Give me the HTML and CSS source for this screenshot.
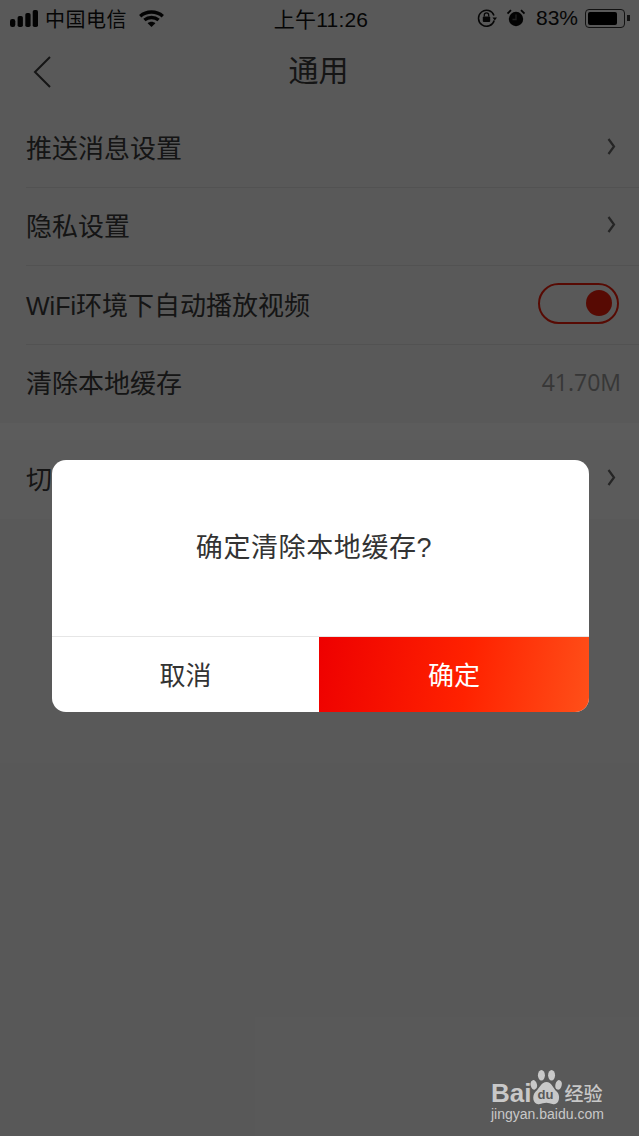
FILE: index.html
```html
<!DOCTYPE html>
<html lang="zh-CN">
<head>
  <meta charset="UTF-8">
  <meta name="viewport" content="width=device-width, initial-scale=1.0">
  <title>通用</title>
  <link rel="stylesheet" href="styles.css">
</head>
<body>
  <div id="page">
    <!-- Status bar -->
    <div class="status-bar">
      <div class="status-left">
        <svg class="signal" width="28" height="17" viewBox="0 0 28 17">
          <rect x="0" y="9" width="5.300" height="8" rx="2.200"/>
          <rect x="7.600" y="6" width="5.300" height="11" rx="1.800"/>
          <rect x="15.300" y="3" width="5.300" height="14" rx="1.800"/>
          <rect x="22.700" y="0" width="5.300" height="17" rx="1.800"/>
        </svg>
        <span class="carrier">中国电信</span>
        <svg class="wifi" width="25" height="17" viewBox="0 0 25 17">
          <path d="M1.200 6.200C7.500 .6 17.500 .6 23.800 6.200" fill="none" stroke="#0b0b0b" stroke-width="3.400"/>
          <path d="M5.400 10C9.500 6.600 15.500 6.600 19.600 10" fill="none" stroke="#0b0b0b" stroke-width="3.400"/>
          <path d="M8.600 13.300C10.800 11.300 14.200 11.300 16.400 13.300L12.500 17Z" fill="#0b0b0b"/>
        </svg>
      </div>
      <div class="status-time">上午11:26</div>
      <div class="status-right">
        <svg class="rotate-lock" width="20" height="20" viewBox="0 0 20 20">
          <path d="M17 7.500A8 8 0 1 0 17.200 12.500" fill="none" stroke="#111" stroke-width="1.500"/>
          <path d="M15.500 9.500H20L17.800 12.500Z" fill="#111"/>
          <rect x="5.800" y="8.500" width="7.400" height="5.500" rx="1" fill="#111"/>
          <path d="M7.300 8.500V7A2.200 2.200 0 0 1 11.700 7V8.500" fill="none" stroke="#111" stroke-width="1.300"/>
        </svg>
        <svg class="alarm" width="18" height="18" viewBox="0 0 18 18">
          <circle cx="9" cy="10" r="7.200" fill="#0b0b0b"/>
          <path d="M9 5.500V10.500H5.500" fill="none" stroke="#595959" stroke-width="1.300"/>
          <path d="M.5 4.500L4 1.200M17.500 4.500L14 1.200" stroke="#0b0b0b" stroke-width="1.800"/>
        </svg>
        <span class="battery-text">83%</span>
        <div class="battery">
          <div class="battery-body"><div class="battery-level"></div></div>
          <div class="battery-tip"></div>
        </div>
      </div>
    </div>

    <!-- Nav bar -->
    <div class="nav-bar">
      <svg class="back" width="18" height="32" viewBox="0 0 18 32">
        <path d="M17 1L2 16L17 31" fill="none" stroke="#3a3a3a" stroke-width="2"/>
      </svg>
      <h1>通用</h1>
    </div>

    <!-- Settings -->
    <div class="group">
      <div class="row">
        <span>推送消息设置</span>
        <svg class="arrow" width="9" height="17" viewBox="0 0 9 17"><path d="M1.500 1L7 8.500L1.500 16" fill="none" stroke="#666" stroke-width="2.200"/></svg>
      </div>
      <div class="row">
        <span>隐私设置</span>
        <svg class="arrow" width="9" height="17" viewBox="0 0 9 17"><path d="M1.500 1L7 8.500L1.500 16" fill="none" stroke="#666" stroke-width="2.200"/></svg>
      </div>
      <div class="row">
        <span><span class="latin">WiFi</span>环境下自动播放视频</span>
        <div class="switch"><div class="knob"></div></div>
      </div>
      <div class="row">
        <span>清除本地缓存</span>
        <span class="value">41.70M</span>
      </div>
    </div>
    <div class="group group-last">
      <div class="row">
        <span>切换账号</span>
        <svg class="arrow" width="9" height="17" viewBox="0 0 9 17"><path d="M1.500 1L7 8.500L1.500 16" fill="none" stroke="#666" stroke-width="2.200"/></svg>
      </div>
    </div>
  </div>

  <!-- Confirm dialog -->
  <div class="overlay">
    <div class="dialog">
      <div class="dialog-text">确定清除本地缓存?</div>
      <div class="dialog-buttons">
        <div class="btn-cancel">取消</div>
        <div class="btn-ok">确定</div>
      </div>
    </div>
  </div>

  <!-- Watermark -->
  <div class="watermark">
    <div class="wm-top">
      <span class="wm-bai">Bai</span>
      <span class="wm-paw">
        <svg width="33" height="35" viewBox="1 4 52 47" preserveAspectRatio="none">
          <ellipse cx="7" cy="24" rx="5" ry="6.500" transform="rotate(-15 7 24)"/>
          <ellipse cx="19" cy="11" rx="5.500" ry="7"/>
          <ellipse cx="35" cy="11" rx="5.500" ry="7"/>
          <ellipse cx="46" cy="24" rx="5" ry="6.500" transform="rotate(15 46 24)"/>
          <path d="M27 20C35 20 37 28 43 33C50 38 47 51 38 50C33 49 30 48 27 48C23 48 20 49 15 50C6 51 3 39 10 33C16 28 19 20 27 20Z"/>
        </svg>
        <span class="wm-du">du</span>
      </span>
      <span class="wm-jy">经验</span>
    </div>
    <div class="wm-url">jingyan.baidu.com</div>
  </div>
</body>
</html>
```

FILE: styles.css
```css
html, body {
  margin: 0;
  padding: 0;
}
body {
  width: 639px;
  height: 1136px;
  overflow: hidden;
  position: relative;
  background-color: #f5f5f5;
  font-family: "Liberation Sans", "Noto Sans CJK SC", sans-serif;
  color: #3a3a3a;
}

#page {
  display: flex;
  flex-direction: column;
  background-color: #ffffff;
}

/* Status bar */
.status-bar {
  height: 36px;
  display: grid;
  grid-template-columns: 1fr auto 1fr;
  align-items: center;
  padding: 0 9px 0 10px;
  color: #111111;
  background-color: #f5f5f5;
  box-sizing: border-box;
}
.status-left {
  display: flex;
  align-items: center;
}
.signal {
  fill: #0b0b0b;
}
.carrier {
  font-size: 20px;
  letter-spacing: 0.5px;
  margin-left: 7px;
}
.wifi {
  margin-left: 12px;
}
.status-time {
  font-size: 21px;
  letter-spacing: 0.2px;
  padding-left: 2px;
}
.status-right {
  display: flex;
  align-items: center;
  justify-content: flex-end;
}
.alarm {
  margin-left: 10px;
}
.battery-text {
  font-size: 21px;
  margin-left: 11px;
}
.battery {
  display: flex;
  align-items: center;
  margin-left: 7px;
}
.battery-body {
  width: 40px;
  height: 19px;
  border: 1px solid #333333;
  border-radius: 4px;
  padding: 2px;
  box-sizing: border-box;
}
.battery-level {
  width: 29px;
  height: 100%;
  background-color: #000000;
  border-radius: 2px;
}
.battery-tip {
  width: 3px;
  height: 6px;
  margin-left: 2px;
  background-color: #333333;
}

/* Nav bar */
.nav-bar {
  height: 73px;
  position: relative;
  display: flex;
  align-items: center;
  justify-content: center;
  padding-bottom: 10px;
  background-color: #f5f5f5;
  box-sizing: border-box;
}
.nav-bar h1 {
  margin: 0 2px 0 0;
  font-size: 30px;
  font-weight: 400;
}
.back {
  position: absolute;
  left: 33px;
  top: 20px;
}

/* Settings rows */
.group {
  background-color: #f5f5f5;
  margin-bottom: 17px;
}
.group-last {
  background-color: #fcfcfc;
  margin-bottom: 0;
}
.row {
  height: 78.500px;
  margin-left: 26px;
  padding: 0 20px 3px 0;
  display: flex;
  align-items: center;
  justify-content: space-between;
  font-size: 26px;
  border-bottom: 1px solid #e2e2e2;
  box-sizing: border-box;
}
.group .row:last-child {
  border-bottom-color: transparent;
}
.latin {
  font-size: 25px;
}
.row .arrow {
  margin-right: 3px;
}
.value {
  font-family: "Open Sans", sans-serif;
  font-size: 23px;
  color: #999999;
  margin-right: -2px;
}
.switch {
  width: 81px;
  height: 41px;
  border: 2.500px solid #f01e0a;
  border-radius: 22px;
  display: flex;
  align-items: center;
  justify-content: flex-end;
  padding-right: 5px;
  box-sizing: border-box;
}
.knob {
  width: 26px;
  height: 26px;
  border-radius: 50%;
  background-color: #f01e0a;
}

/* Dialog */
.overlay {
  position: absolute;
  top: 0;
  left: 0;
  width: 100%;
  height: 100%;
  background-color: rgba(0, 0, 0, 0.64);
}
.dialog {
  position: absolute;
  left: 52px;
  top: 460px;
  width: 537px;
  height: 252px;
  border-radius: 14px;
  overflow: hidden;
  background-color: #ffffff;
  display: flex;
  flex-direction: column;
}
.dialog-text {
  flex: 1;
  display: flex;
  align-items: center;
  justify-content: center;
  padding: 0 13px 6px 0;
  font-size: 27px;
  letter-spacing: 0.6px;
  color: #333333;
  border-bottom: 1px solid #e6e6e6;
}
.dialog-buttons {
  height: 75px;
  display: flex;
  font-size: 26px;
}
.btn-cancel, .btn-ok {
  display: flex;
  align-items: center;
  justify-content: center;
  padding-bottom: 3px;
  box-sizing: border-box;
}
.btn-cancel {
  width: 267px;
  color: #333333;
}
.btn-ok {
  flex: 1;
  color: #ffffff;
  background: linear-gradient(100deg, #ee0000, #ff2200 55%, #ff5019);
}

/* Watermark */
.watermark {
  position: absolute;
  left: 491px;
  bottom: 14px;
  color: #c8c8c8;
}
.wm-top {
  display: flex;
  align-items: flex-end;
}
.wm-bai {
  font-weight: 700;
  font-size: 26px;
  line-height: 24px;
}
.wm-paw {
  position: relative;
  width: 33px;
  height: 35px;
  margin-left: -1px;
}
.wm-paw svg {
  display: block;
  fill: #c8c8c8;
}
.wm-du {
  position: absolute;
  left: 7px;
  bottom: 3px;
  font-weight: 700;
  font-size: 13px;
  line-height: 14px;
  color: #595959;
}
.wm-jy {
  font-family: "Noto Sans CJK SC", sans-serif;
  font-size: 19px;
  line-height: 24px;
  font-weight: 500;
  margin-left: 1px;
}
.wm-url {
  font-size: 14px;
  line-height: 16px;
  margin-top: 1px;
}
```
